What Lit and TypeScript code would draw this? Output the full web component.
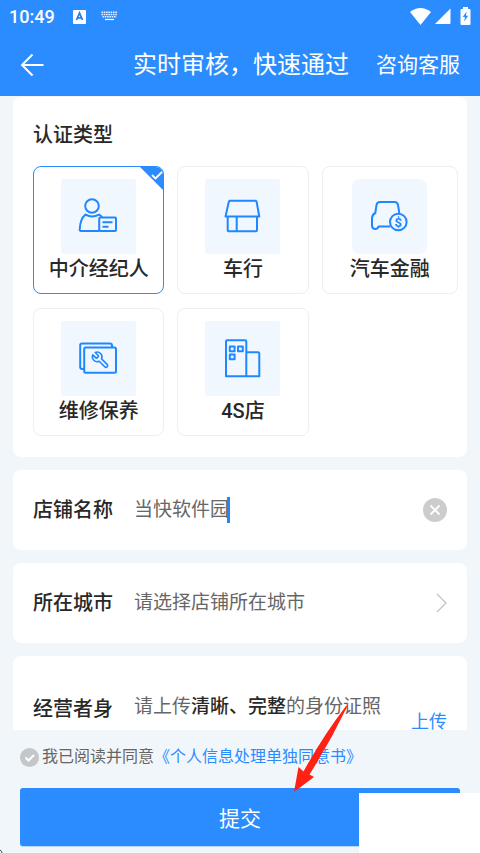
import { LitElement, html, css, svg } from "lit";
import { customElement, state } from "lit/decorators.js";
import { classMap } from "lit/directives/class-map.js";

const kinds = [
  {
    id: "agent",
    name: "中介经纪人",
    icon: svg`<circle cx="31" cy="27" r="6.8"/>
      <path d="M38 52H20q-1.400 0-1.300-1.400C19 43 21 38.500 24.500 35.600q6.500 3.600 13.600 0q1.800.900 3 2.900"/>
      <rect x="38.200" y="38.600" width="16.800" height="13.400" rx="1"/>
      <path d="M41.500 43.300h10M41.500 47.700h6"/>`,
  },
  {
    id: "dealer",
    name: "车行",
    icon: svg`<path d="M25 21.800h25.400q1 0 1.200 1L54.300 37.600H20.500L23.800 22.800q.200-1 1.200-1z"/>
      <path d="M22.700 37.600V51.300q0 1 1 1H51q1 0 1-1V37.600M31.700 37.600V52.300"/>`,
  },
  {
    id: "finance",
    name: "汽车金融",
    round: true,
    icon: svg`<path d="M47.300 34L46 26q-.500-3-3.500-3H28q-3 0-3.500 3l-1.200 8q-3 1.500-3.300 5v7.500q0 3.300 3 3.500q2.500.200 3.500-2.400H38"/>
      <circle cx="46.300" cy="43" r="8.300"/>
      <text class="coin" x="46.300" y="47.700" text-anchor="middle">$</text>`,
  },
  {
    id: "repair",
    name: "维修保养",
    icon: svg`<path d="M23 48h-1.800q-2 0-2-2V24.300q0-1.800 1.800-1.800H49q2 0 2 2v1.600"/>
      <rect x="23.200" y="26.500" width="31.800" height="25.300" rx="1.500"/>
      <path transform="translate(49 29.500) scale(-.800 .800)" d="M14.700 6.300a1 1 0 0 0 0 1.400l1.600 1.600a1 1 0 0 0 1.400 0l3.770-3.770a6 6 0 0 1-7.940 7.940l-6.910 6.910a2.120 2.120 0 0 1-3-3l6.910-6.910a6 6 0 0 1 7.940-7.940l-3.760 3.760z"/>`,
  },
  {
    id: "flagship",
    name: "4S店",
    icon: svg`<path d="M21 55.300V20.500q0-1.300 1.300-1.300H40q1.300 0 1.300 1.300V55.300zM41.300 31.200H53q1.300 0 1.300 1.300V55.300H41.300"/>
      <path d="M24.800 25.500h4.800v4.800h-4.800zM33 25.500h4.800v4.800H33zM24.800 33.500h4.800v4.800h-4.800z"/>`,
  },
];

@customElement("app-root")
export class AppRoot extends LitElement {
  @state() kind = "agent";
  @state() shop = "当快软件园";

  static styles = css`
    :host {
      display: flex;
      flex-direction: column;
      position: relative;
      height: 100vh;
      overflow: hidden;
      background: #f1f6fa;
      color: #282828;
      font-family: Roboto, "Noto Sans CJK SC", sans-serif;
    }
    * { box-sizing: border-box; }
    svg { display: block; fill: none; }
    button, input { font: inherit; color: inherit; border: 0; background: none; padding: 0; margin: 0; }
    a { text-decoration: none; }
    header { background: #2b8cff; color: #fff; flex: none; }
    .status {
      display: flex;
      align-items: center;
      height: 32px;
      padding: 0 9px 0 9px;
      font-size: 18px;
      font-weight: 500;
    }
    .status .letter { margin-left: 18px; }
    .status .keys { margin-left: 14px; }
    .status .wifi { margin-left: auto; }
    .status .signal { margin: 0 9px 0 4px; }
    .nav { display: flex; align-items: center; height: 64px; padding: 2px 20px 0; }
    h1 { margin: 0 27px 0 auto; font-size: 24px; font-weight: 400; line-height: 32px; }
    .service { color: #fff; font-size: 21px; line-height: 32px; }
    main {
      flex: 1;
      min-height: 0;
      overflow: hidden;
      display: flex;
      flex-direction: column;
      gap: 13px;
      padding: 1px 13px 0;
    }
    .card { flex: none; background: #fff; border-radius: 8px; }
    .types { margin: 0; padding: 23px 9px 21px 20px; }
    h2 { margin: 0 0 16px; font-size: 20px; line-height: 30px; font-weight: 500; }
    .grid { display: grid; grid-template-columns: 131fr 131fr 136fr; gap: 14px 13px; }
    .type {
      position: relative;
      display: flex;
      flex-direction: column;
      align-items: center;
      padding: 12px 0 9px;
      border: 1px solid #eee;
      border-radius: 8px;
      overflow: hidden;
      font-size: 20px;
      line-height: 30px;
      font-weight: 500;
    }
    .type.on { border-color: #2b8cff; }
    .type input { position: absolute; opacity: 0; }
    .corner { position: absolute; top: 0; right: 0; }
    .tile {
      width: 75px;
      height: 75px;
      background: #f0f7ff;
      border-radius: 2px;
      stroke: #1f87ff;
      stroke-width: 2;
      stroke-linejoin: round;
    }
    .tile.round { border-radius: 8px; }
    .coin { fill: #1f87ff; stroke: none; font: 700 13px Roboto, sans-serif; }
    .row { display: flex; align-items: center; min-height: 80px; padding: 0 20px; }
    .name { width: 80px; margin-right: 21px; flex: none; font-size: 20px; line-height: 32px; font-weight: 500; }
    .value { font-size: 19px; line-height: 28px; color: #666; }
    .value b { font-weight: 500; color: #282828; }
    input.value { width: 93px; outline: 0; }
    .caret { width: 3px; height: 26px; background: #1f87ff; }
    .end { margin-left: auto; }
    .pick { flex: 1; display: flex; align-items: center; text-align: left; }
    .identity { align-items: flex-start; padding-top: 37px; padding-bottom: 20px; }
    .upload { color: #2b8cff; font-size: 18px; line-height: 58px; margin-left: auto; }
    footer { flex: none; padding: 14px 20px 7px; }
    .agree { display: flex; align-items: center; font-size: 16px; line-height: 26px; color: #666; margin-bottom: 18px; white-space: nowrap; }
    .agree a { color: #2b8cff; }
    .tick { position: relative; display: flex; width: 19px; height: 19px; margin-right: 3px; }
    .tick input { appearance: none; width: 19px; height: 19px; border-radius: 50%; background: #c4c7c9; }
    .tick svg { position: absolute; inset: 0; pointer-events: none; }
    .submit {
      display: block;
      width: 100%;
      height: 58px;
      border-radius: 3px;
      background: #2b8cff;
      box-shadow: 0 1px #b5d8fd;
      color: #fff;
      font-size: 21px;
    }
    .patch { position: absolute; right: 0; bottom: 0; width: 121px; height: 60px; background: #fff; }
    .pointer { position: absolute; left: 293px; bottom: 61px; pointer-events: none; }
    .speck { position: absolute; left: 0; bottom: 0; }
  `;

  render() {
    return html`
      <header>
        <div class="status">
          <span>10:49</span>
          <svg class="letter" width="14" height="15" viewBox="0 0 14 15">
            <rect width="13" height="14" y="1" rx="1" fill="#fff" />
            <path d="M3.500 11L6.500 4L9.500 11M4.500 8.800h4" stroke="#2b7de0" stroke-width="1.800" />
          </svg>
          <svg class="keys" width="17" height="10" viewBox="0 0 17 10">
            <path d="M.500 1.200h16M.500 3.500h16M1.500 5.700h14" stroke="#e5f1ff" stroke-width="1.600" stroke-dasharray="1.600 .700" />
            <path d="M4 8.500h9" stroke="#fff" stroke-width="1.200" />
          </svg>
          <svg class="wifi" width="21" height="17" viewBox="0 0 21 17">
            <path d="M0 4Q10.500-4 21 4L10.500 17z" fill="#fff" />
          </svg>
          <svg class="signal" width="16" height="16" viewBox="0 0 16 16">
            <path d="M15.500 .500V15q0 1-1 1H0z" fill="#fff" />
          </svg>
          <svg width="11" height="18" viewBox="0 0 11 18">
            <path d="M3 0h5v2h1.500q1 0 1 1v14q0 1-1 1h-8q-1 0-1-1V3q0-1 1-1H3z" fill="#fff" />
            <path d="M6.500 4.500L2.800 10h2.200l-.800 4.500L8.200 8.800H6z" fill="#2b8cff" />
          </svg>
        </div>
        <div class="nav">
          <button aria-label="返回">
            <svg width="24" height="24" viewBox="0 0 24 24" stroke="#fff" stroke-width="2">
              <path d="M12.500 1.500L2 12l10.500 10.500M2 12h21.500" />
            </svg>
          </button>
          <h1>实时审核，快速通过</h1>
          <a class="service" href="#service">咨询客服</a>
        </div>
      </header>

      <main>
        <section class="card types">
          <h2 id="types">认证类型</h2>
          <div class="grid" role="radiogroup" aria-labelledby="types">
            ${kinds.map(
              (k) => html`<label class=${classMap({ type: true, on: k.id === this.kind })}>
                <input type="radio" name="kind" .checked=${k.id === this.kind} @change=${() => (this.kind = k.id)} />
                <svg class=${classMap({ tile: true, round: !!k.round })} viewBox="0 0 75 75">${k.icon}</svg>
                <span>${k.name}</span>
                ${k.id === this.kind
                  ? html`<svg class="corner" width="23" height="23" viewBox="0 0 23 23">
                      <path d="M0 0h23v23z" fill="#2b8cff" />
                      <path d="M12 8l3.500 3.500L22 5" stroke="#fff" stroke-width="1.800" />
                    </svg>`
                  : ""}
              </label>`
            )}
          </div>
        </section>

        <section class="card row">
          <label class="name" for="shop">店铺名称</label>
          <input class="value" id="shop" type="text" .value=${this.shop}
            @input=${(e: Event) => (this.shop = (e.target as HTMLInputElement).value)} />
          <span class="caret"></span>
          <button class="end" aria-label="清除" @click=${() => (this.shop = "")}>
            <svg width="24" height="24" viewBox="0 0 24 24">
              <circle cx="12" cy="12" r="12" fill="#ccc" />
              <path d="M7.500 7.500l9 9M16.500 7.500l-9 9" stroke="#fff" stroke-width="1.800" />
            </svg>
          </button>
        </section>

        <section class="card row">
          <span class="name" id="city">所在城市</span>
          <button class="pick" aria-labelledby="city">
            <span class="value">请选择店铺所在城市</span>
            <svg class="end" width="11" height="20" viewBox="0 0 11 20">
              <path d="M1 1l9 9l-9 9" stroke="#c4c4c4" stroke-width="1.300" />
            </svg>
          </button>
        </section>

        <section class="card row identity">
          <span class="name">经营者身份证</span>
          <span class="value">请上传<b>清晰、完整</b>的身份证照</span>
          <button class="upload">上传</button>
        </section>
      </main>

      <footer>
        <div class="agree">
          <span class="tick">
            <input id="agree" type="checkbox" />
            <svg width="19" height="19" viewBox="0 0 19 19">
              <path d="M5.500 9.500l3 3l5.500-5.500" stroke="#fff" stroke-width="2" />
            </svg>
          </span>
          <label for="agree">我已阅读并同意</label><a href="#terms">《个人信息处理单独同意书》</a>
        </div>
        <button class="submit">提交</button>
      </footer>

      <div class="patch"></div>
      <svg class="pointer" width="55" height="87" viewBox="0 0 55 87">
        <path d="M1 87L5.500 62L10.500 66.500Q30 31 53 1Q54.500 .500 54 2Q37 37 16.500 69.500L21 72z" fill="#ff2114" />
      </svg>
      <svg class="speck" width="3" height="4" viewBox="0 0 3 4"><path d="M0 1q2 1 2 3" stroke="#444" /></svg>
    `;
  }
}
